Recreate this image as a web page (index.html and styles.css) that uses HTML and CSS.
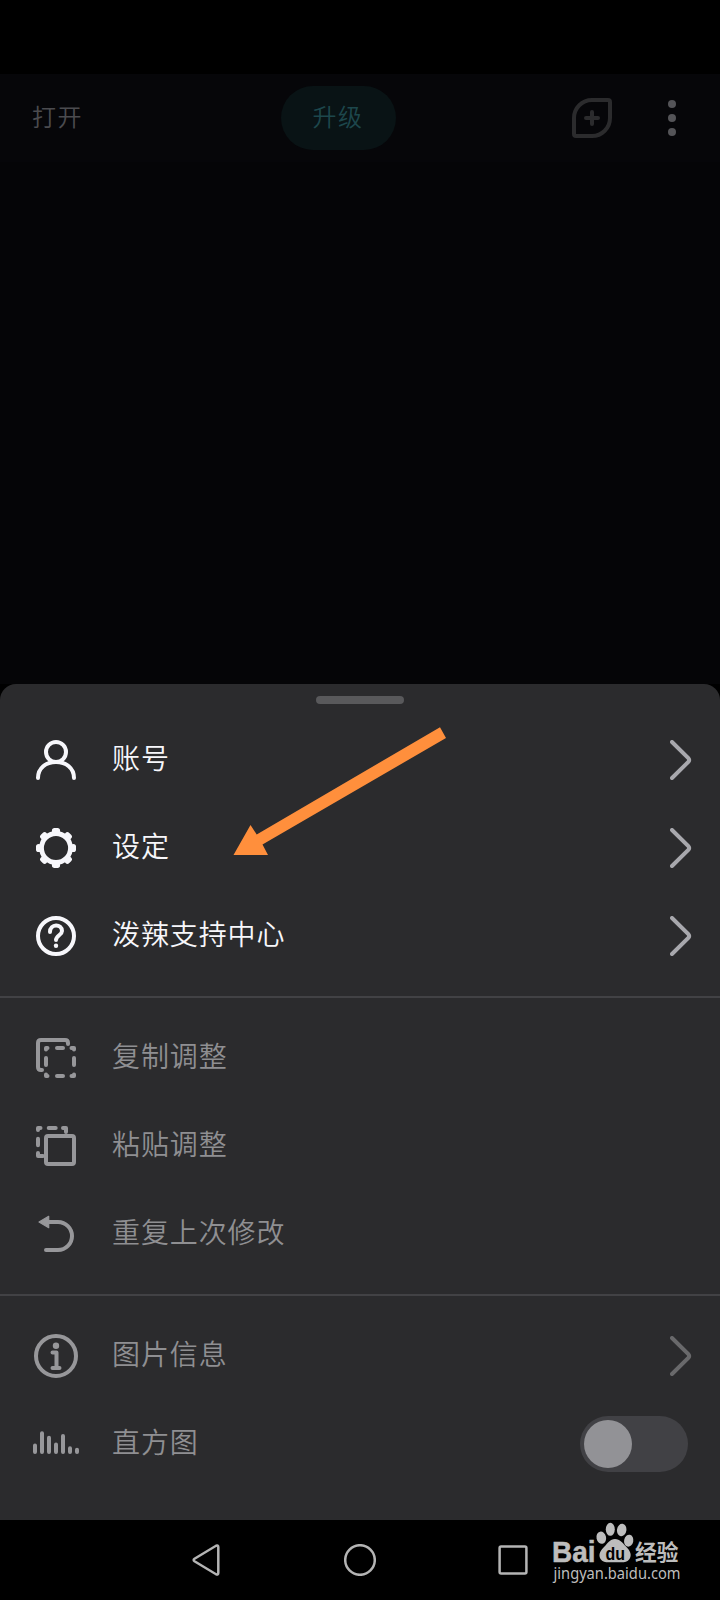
FILE: index.html
```html
<!DOCTYPE html>
<html lang="zh-CN">
<head>
<meta charset="utf-8">
<title>菜单</title>
<link rel="stylesheet" href="styles.css">
</head>
<body>
<div class="screen">
  <div class="status-bar"></div>
  <header class="topbar">
    <span class="open">打开</span>
    <span class="upgrade">升级</span>
    <div class="tools">
      <svg width="40" height="40" viewBox="0 0 40 40" fill="none" stroke="#2b2b2d" stroke-width="4" stroke-linecap="round"><path d="M20 2H36Q38 2 38 4V20A18 18 0 0 1 20 38H4Q2 38 2 36V20A18 18 0 0 1 20 2Z"/><path d="M14 20H26M20 14V26"/></svg>
      <svg width="8" height="36" viewBox="0 0 8 36" fill="#545458"><circle cx="4" cy="4" r="4"/><circle cx="4" cy="18" r="4"/><circle cx="4" cy="32" r="4"/></svg>
    </div>
  </header>
  <main class="canvas"></main>
  <section class="sheet">
    <div class="handle"></div>
    <ul class="group">
      <li class="row">
        <svg class="icon" viewBox="0 0 48 48" fill="none" stroke="#f7f7fb" stroke-width="4" stroke-linecap="round"><circle cx="24" cy="16" r="10"/><path d="M6 42C6 32 14 26 24 26S42 32 42 42"/></svg>
        <span class="label">账号</span>
        <svg class="chevron" viewBox="0 0 22 40"><path d="M2 2L18.300 18Q20 20 18.300 22L2 38"/></svg>
      </li>
      <li class="row">
        <svg class="icon" viewBox="0 0 48 48" fill="none" stroke="#f7f7fb"><circle cx="24" cy="24" r="14.500" stroke-width="4.800"/><g stroke-width="5.400" stroke-linecap="round" stroke-linejoin="round"><path d="M22.600 6.700H25.400M22.600 41.300H25.400M6.700 22.600V25.400M41.300 22.600V25.400M10.800 12.600L12.600 10.800M35.400 10.800L37.200 12.600M10.800 35.400L12.600 37.200M35.400 37.200L37.200 35.400"/></g></svg>
        <span class="label">设定</span>
        <svg class="chevron" viewBox="0 0 22 40"><path d="M2 2L18.300 18Q20 20 18.300 22L2 38"/></svg>
      </li>
      <li class="row">
        <svg class="icon" viewBox="0 0 48 48" fill="none" stroke="#f7f7fb" stroke-width="4" stroke-linecap="round"><circle cx="24" cy="24" r="18"/><path d="M18 20C18 11.500 30 11.500 30 19C30 23 24 23.500 24 28"/><circle cx="24" cy="33.800" r="2.200" fill="#f7f7fb" stroke="none"/></svg>
        <span class="label">泼辣支持中心</span>
        <svg class="chevron" viewBox="0 0 22 40"><path d="M2 2L18.300 18Q20 20 18.300 22L2 38"/></svg>
      </li>
    </ul>
    <ul class="group muted">
      <li class="row">
        <svg class="icon" viewBox="0 0 48 48" fill="none" stroke="#97979a" stroke-width="4" stroke-linecap="round" stroke-linejoin="round"><path d="M36 10V9Q36 6 33 6H9Q6 6 6 9V33Q6 36 9 36H10"/><path d="M25 14H31M25 42H31M14 24V31M42 24V31M14 15.500V14H15.500M39.500 14H42V15.500M14 40.500V42H15.500M42 40.500V42H39.500"/></svg>
        <span class="label">复制调整</span>
      </li>
      <li class="row">
        <svg class="icon" viewBox="0 0 48 48" fill="none" stroke="#97979a" stroke-width="4" stroke-linecap="round" stroke-linejoin="round"><rect x="14" y="14" width="28" height="28" rx="2"/><path d="M6 8V6H8.500M16.700 6H23.700M31 6H34V10M6 16.700V23.300M6 31V34H11"/></svg>
        <span class="label">粘贴调整</span>
      </li>
      <li class="row">
        <svg class="icon" viewBox="0 0 48 48" fill="none" stroke="#97979a" stroke-width="4" stroke-linecap="round"><path d="M14 12H26A14 14 0 0 1 26 40H14"/><path d="M7 12L16.700 6.300V17.700Z" fill="#97979a" stroke-width="1.200" stroke-linejoin="round"/></svg>
        <span class="label">重复上次修改</span>
      </li>
    </ul>
    <ul class="group muted">
      <li class="row">
        <svg class="icon" viewBox="0 0 48 48" fill="none" stroke="#97979a" stroke-width="4" stroke-linecap="round" stroke-linejoin="round"><circle cx="24" cy="24" r="20"/><circle cx="24" cy="13.700" r="3.200" fill="#97979a" stroke="none"/><path d="M20.500 20.500H24.500V36M20.500 36H27.500"/></svg>
        <span class="label">图片信息</span>
        <svg class="chevron dim" viewBox="0 0 22 40"><path d="M2 2L18.300 18Q20 20 18.300 22L2 38"/></svg>
      </li>
      <li class="row">
        <svg class="icon" viewBox="0 0 48 48" fill="none" stroke="#97979a" stroke-width="4" stroke-linecap="round"><path d="M3 25.500V32M10 13.300V32M17 17.700V32M24 24.500V32M31 16V32M38 28.300V32M45 29.700V32"/></svg>
        <span class="label">直方图</span>
        <span class="switch"><span class="knob"></span></span>
      </li>
    </ul>
    <svg class="arrow" width="216" height="132" viewBox="232 725 216 132"><path d="M233.500 855L250.500 825L256.700 834.500L440 727.200L446 738L262.500 844.500L268 855Z" fill="#ff8f3c"/></svg>
  </section>
  <nav class="navbar">
    <svg width="28" height="32" viewBox="0 0 28 32"><path d="M2.500 14.800L24 1.800Q26.300 1 26.300 3V29Q26.300 31 24 30.200L2.500 17.200Q.8 16 2.500 14.800Z"/></svg>
    <svg width="32" height="32" viewBox="0 0 32 32"><circle cx="16" cy="16" r="14.800"/></svg>
    <svg width="30" height="30" viewBox="0 0 30 30"><rect x="1.600" y="1.600" width="26.800" height="26.800" rx="1.500"/></svg>
  </nav>
  <svg class="watermark" width="140" height="72" viewBox="548 1520 140 72" fill="#bdbdbd">
    <text class="wm-brand" x="552" y="1561.500" textLength="43.500" lengthAdjust="spacingAndGlyphs">Bai</text>
    <ellipse cx="601.300" cy="1537.700" rx="4.800" ry="6.200" transform="rotate(-12 601.300 1537.700)"/>
    <ellipse cx="610.300" cy="1529.300" rx="4.500" ry="6.500"/>
    <ellipse cx="621.700" cy="1530" rx="4.700" ry="6.300" transform="rotate(8 621.700 1530)"/>
    <ellipse cx="628.700" cy="1540.700" rx="4.600" ry="6" transform="rotate(12 628.700 1540.700)"/>
    <path d="M615 1539C620 1539 622.500 1543 626 1546.500C630.500 1551 632 1555 629.500 1559C626.500 1563.500 621 1562.200 615 1562.200S603.500 1563.500 600.500 1559C598 1554.500 600.500 1550.500 604.500 1546.500C608 1543 610 1539 615 1539Z"/>
    <text class="wm-du" x="605.500" y="1559.500" textLength="19.500" lengthAdjust="spacingAndGlyphs">du</text>
    <text class="wm-cn" x="635" y="1560" textLength="43.500" lengthAdjust="spacingAndGlyphs">经验</text>
    <text class="wm-url" x="553.500" y="1579" textLength="127" lengthAdjust="spacingAndGlyphs">jingyan.baidu.com</text>
  </svg>
</div>
</body>
</html>
```

FILE: styles.css
```css
* { box-sizing: border-box; }
body {
  margin: 0;
  background: #000;
  font-family: "Noto Sans CJK SC", sans-serif;
  font-weight: 350;
}
.screen {
  position: relative;
  width: 720px;
  height: 1600px;
  display: flex;
  flex-direction: column;
  background: #000;
  overflow: hidden;
}
.status-bar { height: 74px; }
.topbar {
  height: 88px;
  padding: 0 44px 0 32px;
  display: grid;
  grid-template-columns: 248.5px 115px 1fr;
  align-items: center;
  background: #060609;
  font-size: 24px;
  letter-spacing: 1.6px;
}
.open { color: #4b4b4f; line-height: 32px; padding-bottom: 4px; }
.upgrade {
  height: 64px;
  border-radius: 32px;
  background: #091315;
  color: #1d474c;
  text-align: center;
  line-height: 60px;
}
.tools {
  display: flex;
  justify-content: flex-end;
  align-items: center;
  gap: 56px;
}
.canvas { flex: 1; background: #050507; }
.sheet {
  position: relative;
  height: 836px;
  padding-top: 12px;
  border-radius: 16px 16px 0 0;
  background: #2b2b2d;
}
.handle {
  width: 88px;
  height: 8px;
  margin: 0 auto 12px;
  border-radius: 4px;
  background: #59595b;
}
.group {
  list-style: none;
  margin: 0;
  padding: 0 0 16px;
}
.group + .group {
  border-top: 2px solid #424245;
  padding-top: 16px;
}
.row {
  height: 88px;
  padding: 0 32px;
  display: flex;
  align-items: center;
}
.icon { width: 48px; height: 48px; overflow: visible; }
.label {
  flex: 1;
  margin-left: 32px;
  padding-bottom: 6px;
  color: #f7f7fb;
  font-size: 28px;
  letter-spacing: 0.9px;
  line-height: 40px;
}
.muted .label { color: #8f8f92; }
.chevron {
  width: 22px;
  height: 40px;
  margin-right: -4px;
  fill: none;
  stroke: #a8a8ad;
  stroke-width: 4;
  stroke-linecap: round;
}
.chevron.dim { stroke: #69696b; }
.switch {
  width: 108px;
  height: 56px;
  padding: 4px;
  border-radius: 28px;
  background: #414145;
}
.knob {
  display: block;
  width: 48px;
  height: 48px;
  border-radius: 50%;
  background: #929296;
}
.arrow { position: absolute; left: 232px; top: 41px; }
.navbar {
  height: 80px;
  padding: 0 192.5px 0 192px;
  display: grid;
  grid-template-columns: 1fr 32px 1fr;
  align-items: center;
  fill: none;
  stroke: #b4b4b4;
  stroke-width: 2.5;
}
.navbar svg:last-child { justify-self: end; }
.watermark { position: absolute; left: 548px; top: 1520px; overflow: visible; }
.wm-brand { font: bold 29px "Liberation Sans", sans-serif; stroke: #bdbdbd; stroke-width: 0.5; }
.wm-du { font: bold 19px "Liberation Sans", sans-serif; fill: #000; }
.wm-cn { font: bold 22px "Noto Sans CJK SC", sans-serif; }
.wm-url { font: 400 16px "Noto Sans", sans-serif; }
```
